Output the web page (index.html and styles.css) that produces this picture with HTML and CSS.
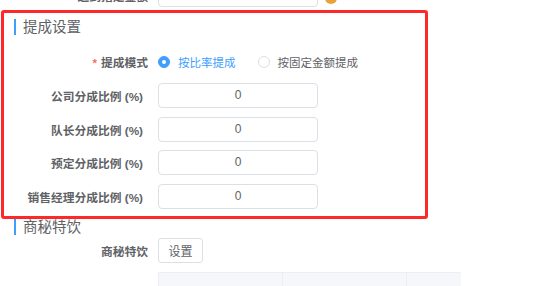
FILE: index.html
```html
<!DOCTYPE html>
<html lang="zh-CN">
<head>
    <meta charset="UTF-8">
    <meta name="viewport" content="width=device-width, initial-scale=1.0">
    <title>提成设置</title>
    <link rel="stylesheet" href="styles.css">
</head>
<body>
    <div class="page">
        <div class="form-item prev-row">
            <label class="form-label">达到指定金额</label>
            <div class="form-content">
                <div class="input">0.00</div>
                <span class="warn-icon"></span>
            </div>
        </div>

        <div class="section">
            <h3 class="section-title">提成设置</h3>
            <div class="form-item radio-row">
                <label class="form-label"><span class="required">*</span>提成模式</label>
                <div class="form-content">
                    <span class="radio checked"><span class="radio-dot"></span>按比率提成</span>
                    <span class="radio"><span class="radio-dot"></span>按固定金额提成</span>
                </div>
            </div>
            <div class="form-item">
                <label class="form-label">公司分成比例 (%)</label>
                <div class="form-content"><div class="input">0</div></div>
            </div>
            <div class="form-item">
                <label class="form-label">队长分成比例 (%)</label>
                <div class="form-content"><div class="input">0</div></div>
            </div>
            <div class="form-item">
                <label class="form-label">预定分成比例 (%)</label>
                <div class="form-content"><div class="input">0</div></div>
            </div>
            <div class="form-item">
                <label class="form-label">销售经理分成比例 (%)</label>
                <div class="form-content"><div class="input">0</div></div>
            </div>
        </div>

        <div class="section section-drinks">
            <h3 class="section-title">商秘特饮</h3>
            <div class="form-item">
                <label class="form-label">商秘特饮</label>
                <div class="form-content"><button class="btn">设置</button></div>
            </div>
            <div class="table">
                <div class="th"></div>
                <div class="th"></div>
                <div class="th last"></div>
            </div>
        </div>

        <div class="highlight"></div>
    </div>
</body>
</html>
```

FILE: styles.css
```css
body {
    margin: 0;
    background-color: #fff;
    font-family: "Liberation Sans", "Noto Sans CJK SC", sans-serif;
    font-size: 12px;
    color: #606266;
}
.page {
    position: relative;
    width: 534px;
    height: 286px;
    overflow: hidden;
}
.form-item {
    display: flex;
    align-items: center;
    height: 25px;
}
.form-label {
    width: 143px;
    padding-right: 15px;
    box-sizing: content-box;
    text-align: right;
    font-size: 11.75px;
    font-weight: 700;
    color: #606266;
}
.form-content {
    display: flex;
    align-items: center;
}
.prev-row {
    margin-top: -18px;
}
.prev-row .form-label {
    position: relative;
    top: 1px;
    width: 148px;
    padding-right: 10px;
}
.input {
    width: 158px;
    height: 23px;
    line-height: 23px;
    border: 1px solid #dcdfe6;
    border-radius: 4px;
    text-align: center;
    color: #606266;
}
.warn-icon {
    width: 12px;
    height: 12px;
    margin-left: 7px;
    margin-top: 7px;
    border-radius: 50%;
    background-color: #e6a23c;
}
.section {
    display: flex;
    flex-direction: column;
}
.section-title {
    margin: 12px 0 0 14px;
    padding-left: 7px;
    height: 16px;
    line-height: 16px;
    border-left: 2px solid #409eff;
    font-size: 14.5px;
    font-weight: 400;
    color: #606266;
}
.section .form-item {
    margin-top: 8.67px;
}
.section .radio-row {
    margin-top: 14.33px;
}
.radio-row .form-label {
    padding-right: 10px;
    width: 148px;
}
.required {
    color: #f56c6c;
    margin-right: 4px;
}
.radio {
    display: flex;
    align-items: center;
    margin-right: 22px;
    font-size: 11.5px;
    color: #606266;
}
.radio-dot {
    width: 10px;
    height: 10px;
    margin-right: 8px;
    border: 1px solid #dcdfe6;
    border-radius: 50%;
    position: relative;
}
.radio.checked {
    color: #409eff;
}
.radio.checked .radio-dot {
    background-color: #409eff;
    border-color: #409eff;
}
.radio.checked .radio-dot::after {
    content: "";
    position: absolute;
    left: 3px;
    top: 3px;
    width: 4px;
    height: 4px;
    border-radius: 50%;
    background-color: #fff;
}
.section-drinks .section-title {
    margin-top: 10px;
}
.section-drinks .form-item {
    margin-top: 3px;
}
.section-drinks .form-label {
    padding-right: 10px;
    width: 148px;
}
.btn {
    width: 45px;
    height: 25px;
    padding: 0;
    border: 1px solid #dcdfe6;
    border-radius: 3px;
    background-color: #fff;
    font-family: inherit;
    font-size: 12px;
    color: #606266;
}
.table {
    display: flex;
    margin: 9px 0 0 158px;
    width: 303px;
}
.th {
    width: 124px;
    height: 30px;
    background-color: #f5f7fa;
    border-top: 1px solid #ebeef5;
    border-left: 1px solid #ebeef5;
}
.th.last {
    width: 55px;
}
.highlight {
    position: absolute;
    left: 1px;
    top: 10px;
    width: 421px;
    height: 203px;
    border: 3px solid #ff2828;
    border-radius: 3px;
}
```
